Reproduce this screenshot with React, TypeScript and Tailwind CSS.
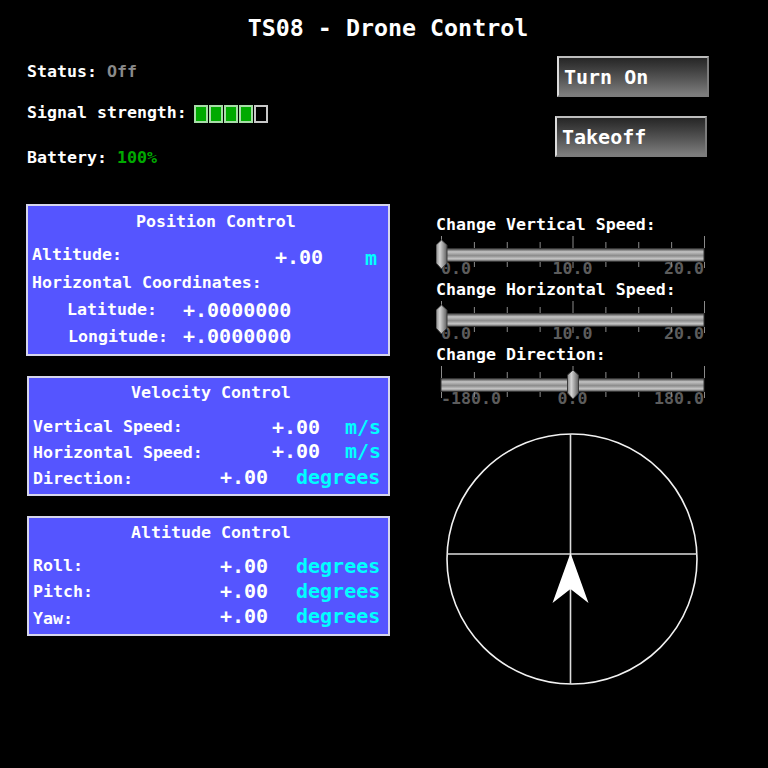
import { useId } from 'react'

const MONO = "font-['DejaVu_Sans_Mono','Liberation_Mono',monospace] font-bold"

function SignalBars({ level }: { level: number }) {
  return (
    <div className="ml-[7px] mt-[2px] flex gap-[1px]">
      {[0, 1, 2, 3, 4].map((i) =>
        i < level ? (
          <div key={i} className="h-[18px] w-[14px] border-2 border-[#a8dca8] bg-[#00aa00]" />
        ) : (
          <div key={i} className="h-[18px] w-[14px] border-2 border-[#c8c8c8] bg-black" />
        )
      )}
    </div>
  )
}

function Row({ children, className = '' }: { children: React.ReactNode; className?: string }) {
  return <div className={`flex items-center pt-[2px] ${className}`}>{children}</div>
}

function Slider({ label, min, mid, max, value }: { label: string; min: string; mid: string; max: string; value: number }) {
  const id = useId().replace(/:/g, '')
  const x0 = 5
  const x1 = 268
  const hx = x0 + (x1 - x0) * value
  const ticks = Array.from({ length: 9 }, (_, i) => x0 + ((x1 - x0) / 8) * i)

  return (
    <div className="h-[65px]">
      <div className="flex h-[22px] items-center pt-[2px] text-[16.6px] text-white">{label}</div>
      <svg width="272" height="43" className="relative z-10 block">
        <defs>
          <linearGradient id={`g${id}`} x1="0" y1="0" x2="0" y2="1">
            <stop offset="0" stopColor="#3c3c3c" />
            <stop offset="0.25" stopColor="#c4c4c4" />
            <stop offset="0.55" stopColor="#8c8c8c" />
            <stop offset="0.8" stopColor="#c8c8c8" />
            <stop offset="1" stopColor="#4e4e4e" />
          </linearGradient>
          <linearGradient id={`h${id}`} x1="0" y1="0" x2="1" y2="0">
            <stop offset="0" stopColor="#8a8a8a" />
            <stop offset="0.35" stopColor="#d4d4d4" />
            <stop offset="1" stopColor="#5e5e5e" />
          </linearGradient>
        </defs>
        {ticks.map((t, i) => {
          const major = i % 4 === 0
          return (
            <g key={i} stroke="#8a8a8a" strokeWidth="1">
              <line x1={t + 0.5} x2={t + 0.5} y1={major ? 1 : 7} y2={13} />
              <line x1={t + 0.5} x2={t + 0.5} y1={27} y2={major ? 33 : 32} />
            </g>
          )
        })}
        <rect x={x0} y={13.5} width={x1 - x0} height={13} fill={`url(#g${id})`} stroke="#333333" strokeWidth="1" />
        <polygon
          points={`${hx + 0.5},5 ${hx + 6},10 ${hx + 6},28 ${hx + 0.5},34 ${hx - 5},28 ${hx - 5},10`}
          fill={`url(#h${id})`}
          stroke="#3a3a3a"
          strokeWidth="1"
        />
      </svg>
      <div className="-mt-[19px] ml-[5px] grid h-[20px] w-[263px] grid-cols-3 text-[16.6px] leading-[20px] text-[#5c5c5c]">
        <span>{min}</span>
        <span className="text-center">{mid}</span>
        <span className="text-right">{max}</span>
      </div>
    </div>
  )
}

function Compass() {
  return (
    <svg width="272" height="262" className="mt-[20px] block">
      <circle cx="136" cy="131" r="125" fill="none" stroke="#f2f2f2" strokeWidth="1.6" />
      <line x1="134.5" y1="6" x2="134.5" y2="256" stroke="#dcdcdc" strokeWidth="1.6" />
      <line x1="11" y1="126" x2="261" y2="126" stroke="#dcdcdc" strokeWidth="1.6" />
      <polygon points="134.5,125 152.5,175 134.5,161 116.5,175" fill="#ffffff" />
    </svg>
  )
}

const attitude = [
  { label: 'Roll:', shift: '' },
  { label: 'Pitch:', shift: '-mt-[4px]' },
  { label: 'Yaw:', shift: '-mt-[6px]' },
]

export default function App() {
  return (
    <div className={`h-[768px] w-[768px] overflow-hidden bg-black text-white ${MONO}`}>
      {/* Title */}
      <div className="flex h-[56px] items-center justify-center pl-[8px] text-[23.3px]">TS08 - Drone Control</div>

      <div className="flex">
        {/* Left column */}
        <div className="w-[390px] pl-[26px]">
          <Row className="h-[30px] pl-[1px] text-[16.6px]">
            <span>Status:&nbsp;</span>
            <span className="text-[#8a8a8a]">Off</span>
          </Row>
          <Row className="h-[52px] pl-[1px] text-[16.6px]">
            <span>Signal strength:</span>
            <SignalBars level={4} />
          </Row>
          <Row className="h-[38px] pl-[1px] text-[16.6px]">
            <span>Battery:&nbsp;</span>
            <span className="text-[#00aa00]">100%</span>
          </Row>

          {/* Position Control */}
          <div className="mt-[28px] h-[152px] w-[364px] border-2 border-[#d6d6ec] bg-[#5555ff] text-[16.6px]">
            <div className="flex h-[30px] items-center pl-[108px] pt-[2px]">Position Control</div>
            <Row className="mt-[4px] h-[28px] pl-[4px]">
              <span className="w-[243px]">Altitude:</span>
              <span className="mt-[3px] w-[90px] text-[20px]">+.00</span>
              <span className="mt-[5px] text-[20px] text-[#00ffff]">m</span>
            </Row>
            <Row className="h-[28px] pl-[4px]">
              <span>Horizontal Coordinates:</span>
            </Row>
            <Row className="h-[27px] pl-[39px]">
              <span className="w-[116px]">Latitude:</span>
              <span className="-mt-[2px] text-[20px]">+.0000000</span>
            </Row>
            <Row className="h-[27px] pl-[40px]">
              <span className="w-[115px]">Longitude:</span>
              <span className="-mt-[4px] text-[20px]">+.0000000</span>
            </Row>
          </div>

          {/* Velocity Control */}
          <div className="ml-[1px] mt-[20px] h-[120px] w-[363px] border-2 border-[#d6d6ec] bg-[#5555ff] text-[16.6px]">
            <div className="flex h-[30px] items-center pl-[102px] pt-[1px]">Velocity Control</div>
            <Row className="mt-[5px] h-[26px] pl-[4px]">
              <span className="w-[239px]">Vertical Speed:</span>
              <span className="-mt-[1px] w-[73px] text-[20px]">+.00</span>
              <span className="-mt-[1px] text-[20px] text-[#00ffff]">m/s</span>
            </Row>
            <Row className="h-[26px] pl-[4px]">
              <span className="w-[239px]">Horizontal Speed:</span>
              <span className="-mt-[5px] w-[73px] text-[20px]">+.00</span>
              <span className="-mt-[5px] text-[20px] text-[#00ffff]">m/s</span>
            </Row>
            <Row className="h-[26px] pl-[4px]">
              <span className="w-[187px]">Direction:</span>
              <span className="-mt-[4px] w-[76px] text-[20px]">+.00</span>
              <span className="-mt-[4px] text-[20px] text-[#00ffff]">degrees</span>
            </Row>
          </div>

          {/* Altitude Control */}
          <div className="ml-[1px] mt-[20px] h-[120px] w-[363px] border-2 border-[#d6d6ec] bg-[#5555ff] text-[16.6px]">
            <div className="flex h-[28px] items-center pl-[102px] pt-[2px]">Altitude Control</div>
            {attitude.map((a, i) => (
              <Row key={a.label} className={`${i === 0 ? 'mt-[6px]' : ''} h-[26.5px] pl-[4px]`}>
                <span className="w-[187px]">{a.label}</span>
                <span className={`w-[76px] text-[20px] ${a.shift}`}>+.00</span>
                <span className={`text-[20px] text-[#00ffff] ${a.shift}`}>degrees</span>
              </Row>
            ))}
          </div>
        </div>

        {/* Right column */}
        <div className="pl-[46px]">
          <button className="ml-[121px] flex h-[41px] w-[152px] items-center border-2 border-b-[#7c7c7c] border-l-[#dcdcdc] border-r-[#7c7c7c] border-t-[#bdbdbd] bg-gradient-to-b from-[#262626] to-[#7e7e7e] pl-[5px] text-[20px] text-white">
            Turn On
          </button>
          <button className="ml-[119px] mt-[19px] flex h-[41px] w-[152px] items-center border-2 border-b-[#7c7c7c] border-l-[#dcdcdc] border-r-[#7c7c7c] border-t-[#bdbdbd] bg-gradient-to-b from-[#262626] to-[#7e7e7e] pl-[5px] text-[20px] text-white">
            Takeoff
          </button>

          <div className="mt-[56px]">
            <Slider label="Change Vertical Speed:" min="0.0" mid="10.0" max="20.0" value={0} />
            <Slider label="Change Horizontal Speed:" min="0.0" mid="10.0" max="20.0" value={0} />
            <Slider label="Change Direction:" min="-180.0" mid="0.0" max="180.0" value={0.5} />
          </div>

          <Compass />
        </div>
      </div>
    </div>
  )
}
